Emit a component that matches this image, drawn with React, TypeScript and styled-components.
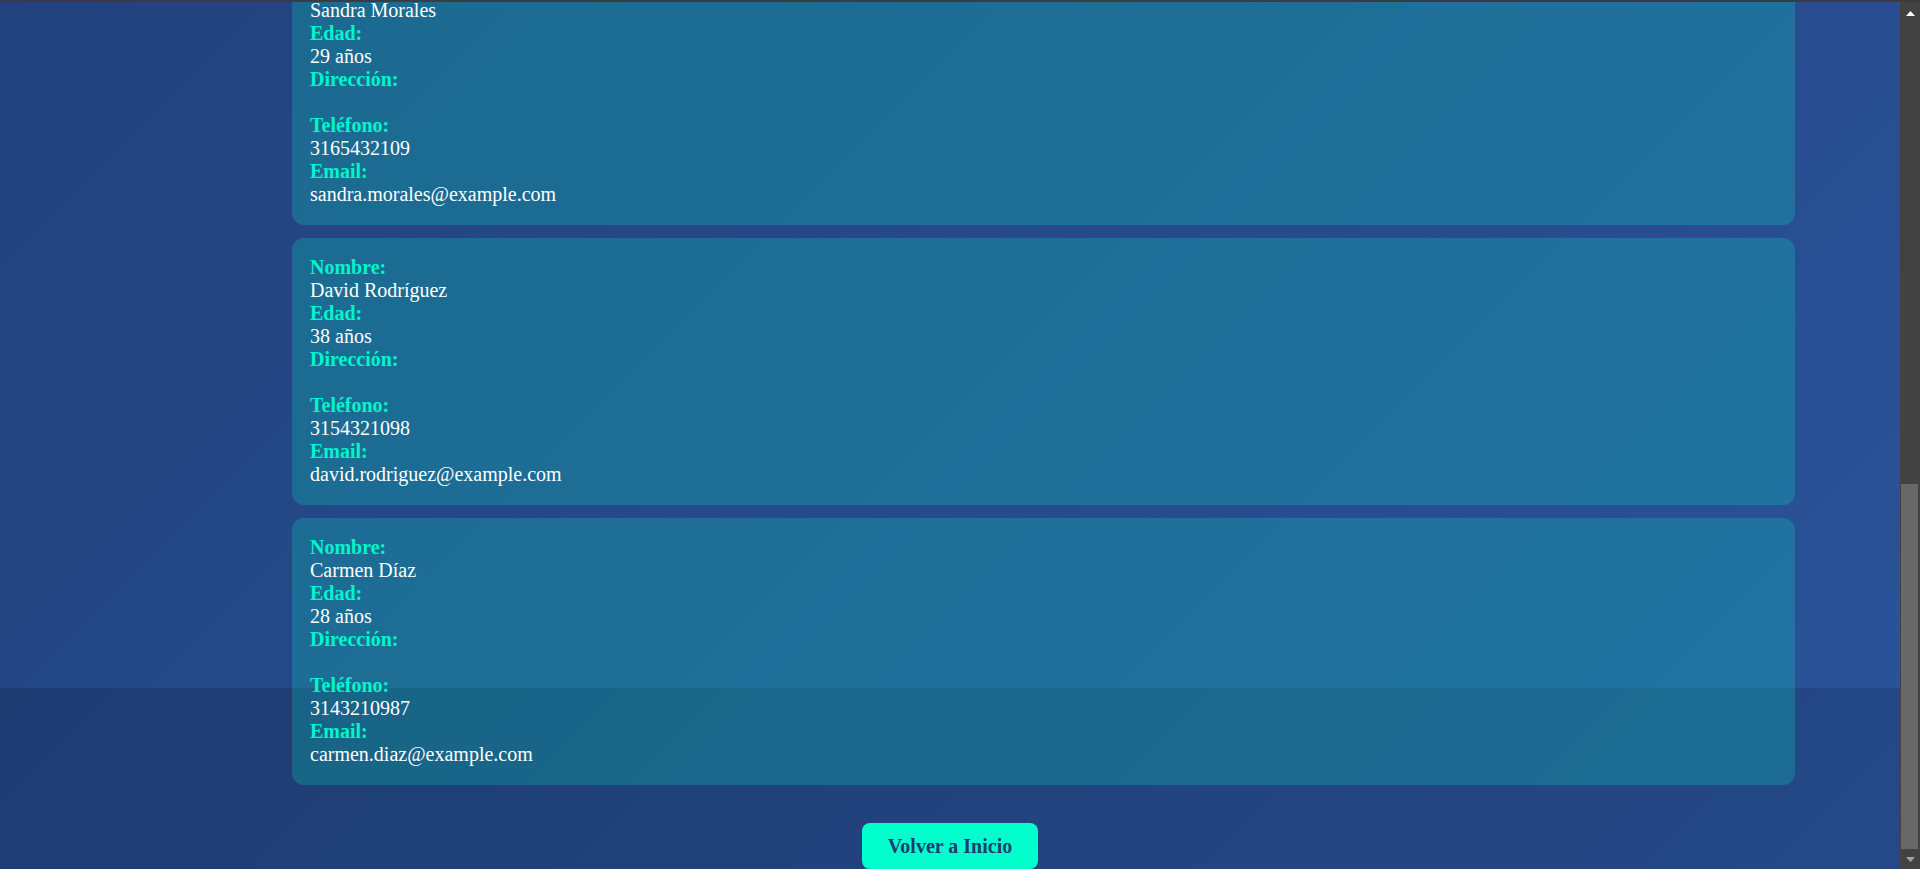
import React, { useLayoutEffect, useRef, useState } from "react";
import styled, { createGlobalStyle } from "styled-components";

const GlobalStyle = createGlobalStyle`
  html, body {
    margin: 0;
    padding: 0;
    height: 100%;
    overflow: hidden;
    background: #3c3c3c;
  }
  #root {
    height: 100%;
  }
`;

const Frame = styled.div`
  height: 100vh;
  display: flex;
  flex-direction: column;
`;

const TopEdge = styled.div`
  flex: none;
  height: 2px;
  background: #3c3c3c;
`;

const Window = styled.div`
  flex: 1;
  min-height: 0;
  display: flex;
`;

const Viewport = styled.div`
  flex: 1;
  min-width: 0;
  overflow: hidden;
`;

const Scrollbar = styled.div`
  flex: none;
  width: 20px;
  display: flex;
  flex-direction: column;
  background: #424242;
`;

const ArrowButton = styled.div<{ $down?: boolean }>`
  flex: none;
  height: 17px;
  display: flex;
  justify-content: center;
  align-items: flex-start;
  padding-top: ${(p) => (p.$down ? "5px" : "9px")};
  box-sizing: border-box;
  color: ${(p) => (p.$down ? "#a3a3a3" : "#ffffff")};
`;

const Track = styled.div`
  flex: 1;
  min-height: 0;
  display: flex;
  flex-direction: column;
`;

const Thumb = styled.div`
  flex: none;
  margin: 0 2px 0 1px;
  background: #686868;
`;

const Page = styled.main`
  min-height: 100%;
  display: flex;
  flex-direction: column;
  align-items: center;
  background: linear-gradient(135deg, #1e3c72, #2a5298);
  background-size: 100% calc(100% - 181px);
  font-family: "Liberation Serif", "Times New Roman", serif;
  color: #ffffff;
`;

const Header = styled.header`
  padding: 72px 0 61px;
  text-align: center;
`;

const Title = styled.h1`
  margin: 0;
  font-size: 48px;
  line-height: 56px;
  color: #00ffcc;
`;

const Subtitle = styled.p`
  margin: 16px 0 0;
  font-size: 20px;
  line-height: 23px;
`;

const CardList = styled.section`
  align-self: stretch;
  display: flex;
  flex-direction: column;
  gap: 13px;
  margin: 0 105px 0 292px;
`;

const Card = styled.article`
  padding: 18px 18px 19px;
  border-radius: 12px;
  background: rgba(0, 255, 204, 0.2);
  font-size: 20px;
  line-height: 23px;
`;

const Label = styled.strong`
  display: block;
  font-weight: 700;
  color: #00f5cc;
`;

const Value = styled.span`
  display: block;
  min-height: 23px;
`;

const HomeButton = styled.button`
  margin-top: 38px;
  padding: 12px 26px;
  border: none;
  border-radius: 8px;
  background: #00ffcc;
  color: #1e3c72;
  font-family: "Liberation Serif", "Times New Roman", serif;
  font-weight: 700;
  font-size: 20px;
  line-height: 22px;
  cursor: pointer;
`;

type Persona = {
  nombre: string;
  edad: number;
  direccion: string;
  telefono: string;
  email: string;
};

const personas: Persona[] = [
  { nombre: "Juan Pérez", edad: 34, direccion: "", telefono: "3198765432", email: "juan.perez@example.com" },
  { nombre: "María García", edad: 41, direccion: "", telefono: "3187654321", email: "maria.garcia@example.com" },
  { nombre: "Carlos López", edad: 25, direccion: "", telefono: "3176543210", email: "carlos.lopez@example.com" },
  { nombre: "Sandra Morales", edad: 29, direccion: "", telefono: "3165432109", email: "sandra.morales@example.com" },
  { nombre: "David Rodríguez", edad: 38, direccion: "", telefono: "3154321098", email: "david.rodriguez@example.com" },
  { nombre: "Carmen Díaz", edad: 28, direccion: "", telefono: "3143210987", email: "carmen.diaz@example.com" },
];

function Field({ label, value }: { label: string; value: string }) {
  return (
    <>
      <Label>{label}</Label>
      <Value>{value}</Value>
    </>
  );
}

function Triangle({ down }: { down?: boolean }) {
  return (
    <svg width="9" height="5" viewBox="0 0 9 5" aria-hidden="true">
      <polygon points={down ? "0,0 9,0 4.5,5" : "0,5 9,5 4.5,0"} fill="currentColor" />
    </svg>
  );
}

export default function App() {
  const ref = useRef<HTMLDivElement>(null);
  const trackRef = useRef<HTMLDivElement>(null);
  const [thumb, setThumb] = useState({ top: 465, height: 365 });

  useLayoutEffect(() => {
    const el = ref.current;
    const track = trackRef.current;
    if (!el) return;
    el.scrollTop = el.scrollHeight;
    if (track) {
      const len = track.clientHeight;
      const h = Math.max(20, Math.round((len * el.clientHeight) / el.scrollHeight));
      const top = Math.round(((len - h) * el.scrollTop) / Math.max(1, el.scrollHeight - el.clientHeight));
      setThumb({ top: Math.max(0, top - 3), height: h });
    }
  }, []);

  return (
    <>
      <GlobalStyle />
      <Frame>
        <TopEdge />
        <Window>
          <Viewport ref={ref}>
            <Page>
              <Header>
                <Title>Lista de Personas</Title>
                <Subtitle>Información registrada</Subtitle>
              </Header>
              <CardList>
                {personas.map((p) => (
                  <Card key={p.email}>
                    <Field label="Nombre:" value={p.nombre} />
                    <Field label="Edad:" value={`${p.edad} años`} />
                    <Field label="Dirección:" value={p.direccion} />
                    <Field label="Teléfono:" value={p.telefono} />
                    <Field label="Email:" value={p.email} />
                  </Card>
                ))}
              </CardList>
              <HomeButton type="button">Volver a Inicio</HomeButton>
            </Page>
          </Viewport>
          <Scrollbar aria-hidden="true">
            <ArrowButton>
              <Triangle />
            </ArrowButton>
            <Track ref={trackRef}>
              <Thumb style={{ marginTop: thumb.top, height: thumb.height }} />
            </Track>
            <ArrowButton $down>
              <Triangle down />
            </ArrowButton>
          </Scrollbar>
        </Window>
      </Frame>
    </>
  );
}
